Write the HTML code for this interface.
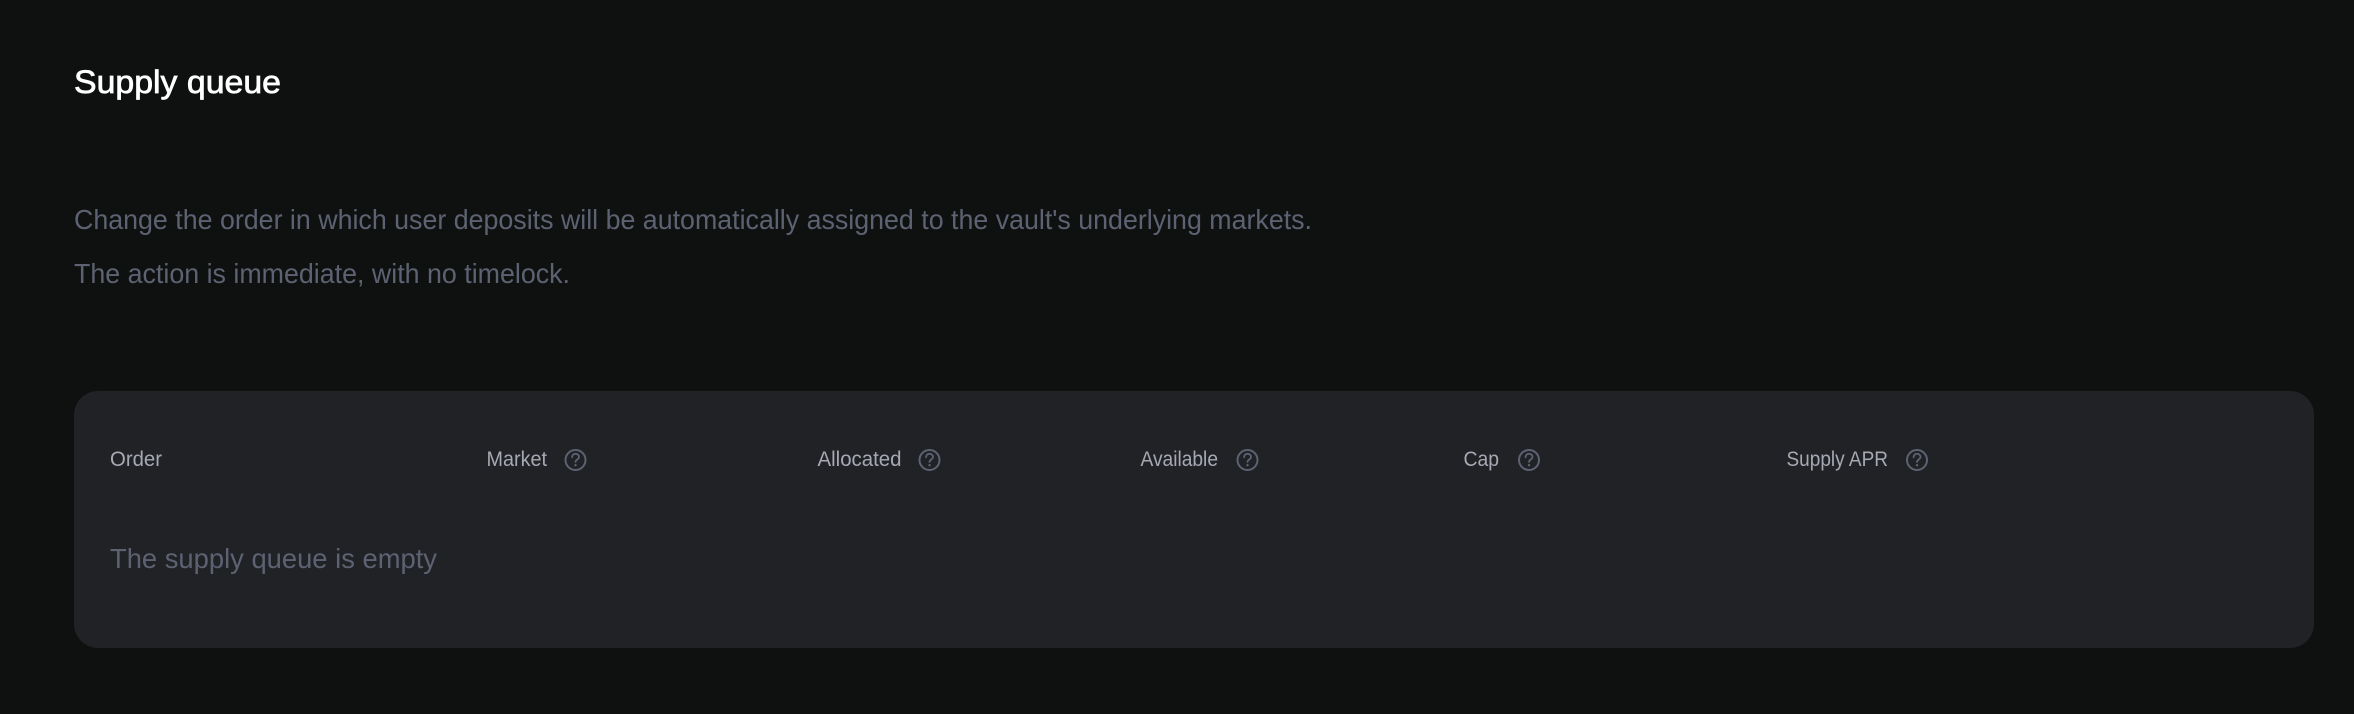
<!DOCTYPE html>
<html lang="en">
<head>
<meta charset="utf-8">
<title>Supply queue</title>
<style>
html,body{margin:0;padding:0;background:#0f1110;width:2354px;height:714px;overflow:hidden}
svg{display:block}
text{font-family:"Liberation Sans",sans-serif}
.d{font-size:28px;fill:#5d6272}
.l{font-size:21.500px;fill:#a6a9b3}
.i circle{fill:none;stroke:#5d6272;stroke-width:2}
.i path{fill:none;stroke:#5d6272;stroke-width:1.800;stroke-linecap:round}
.i .dot{fill:#5d6272;stroke:none}
</style>
</head>
<body>
<svg width="2354" height="714" viewBox="0 0 2354 714" xmlns="http://www.w3.org/2000/svg">
<defs>
<g id="q" class="i">
<circle cx="0" cy="0" r="10"/>
<path d="M-3.400-2.600C-3.400-5-1.700-6.200 0-6.200C2-6.200 3.500-4.900 3.500-3C3.500-.6 0-.4 0 2"/>
<circle class="dot" cx="0" cy="5.200" r="1.200"/>
</g>
</defs>
<rect width="2354" height="714" fill="#0f1110"/>
<text x="74" y="93" font-size="32" fill="#fff" stroke="#fff" stroke-width=".7" textLength="207" lengthAdjust="spacingAndGlyphs">Supply queue</text>
<text class="d" x="74" y="229" textLength="1238" lengthAdjust="spacingAndGlyphs">Change the order in which user deposits will be automatically assigned to the vault's underlying markets.</text>
<text class="d" x="74" y="283" textLength="496" lengthAdjust="spacingAndGlyphs">The action is immediate, with no timelock.</text>
<rect x="74" y="391" width="2240" height="257" rx="24" ry="24" fill="#212226"/>
<text class="l" x="110" y="466" textLength="52" lengthAdjust="spacingAndGlyphs">Order</text>
<text class="l" x="486.500" y="466" textLength="60.500" lengthAdjust="spacingAndGlyphs">Market</text>
<use href="#q" x="575.500" y="460"/>
<text class="l" x="817.500" y="466" textLength="84" lengthAdjust="spacingAndGlyphs">Allocated</text>
<use href="#q" x="929.500" y="460"/>
<text class="l" x="1140.500" y="466" textLength="77.500" lengthAdjust="spacingAndGlyphs">Available</text>
<use href="#q" x="1247.500" y="460"/>
<text class="l" x="1463.500" y="466" textLength="35.500" lengthAdjust="spacingAndGlyphs">Cap</text>
<use href="#q" x="1529" y="460"/>
<text class="l" x="1786.500" y="466" textLength="101.500" lengthAdjust="spacingAndGlyphs">Supply APR</text>
<use href="#q" x="1917" y="460"/>
<text class="d" x="110" y="568" textLength="327" lengthAdjust="spacingAndGlyphs">The supply queue is empty</text>
</svg>
</body>
</html>
